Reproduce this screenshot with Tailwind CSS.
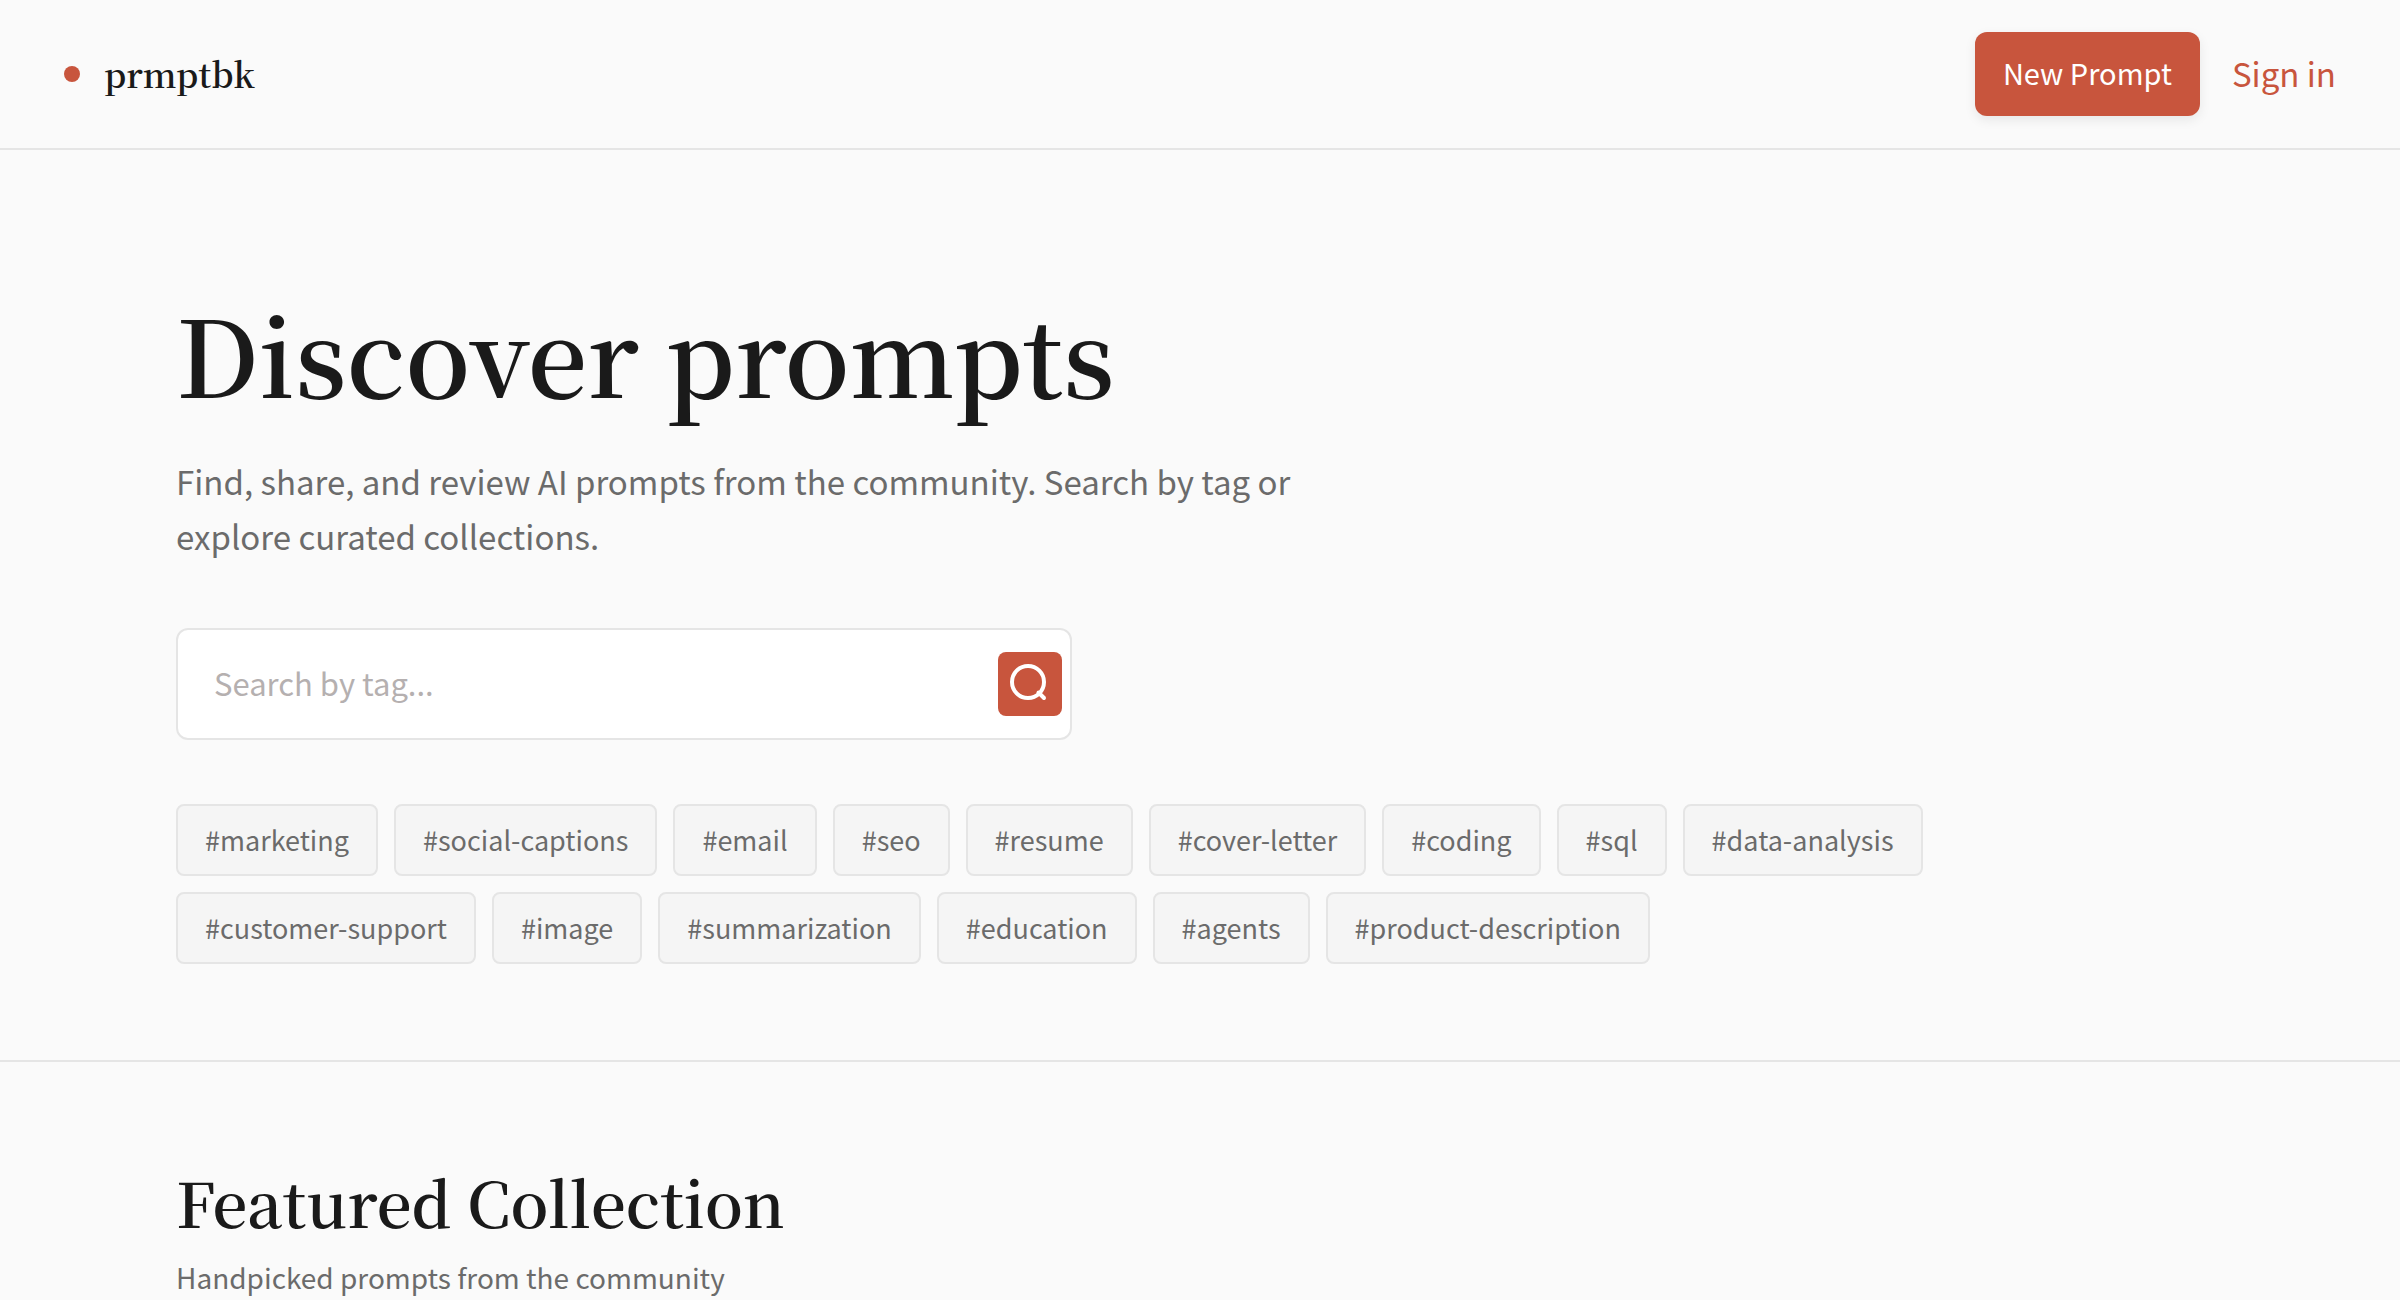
<!DOCTYPE html>
<html lang="en">
<head>
  <meta charset="UTF-8">
  <meta name="viewport" content="width=device-width, initial-scale=1.0">
  <title>prmptbk</title>
  <script src="https://cdn.jsdelivr.net/npm/@tailwindcss/browser@4"></script>
</head>
<body class="bg-[#fafafa] min-h-screen overflow-x-hidden text-[#6b6b6b] font-['Noto_Sans_CJK_SC','Noto_Sans',sans-serif]">

  <!-- Header -->
  <header class="flex items-center justify-between px-16 py-8 border-b-2 border-[#e5e5e5]">
    <a href="#" class="flex items-center gap-6 text-[#1a1a1a]">
      <span class="size-4 rounded-full bg-[#c8553d]"></span>
      <span class="font-['Noto_Serif_CJK_SC','Source_Serif_4','Liberation_Serif',serif] text-[34px] leading-[48px] font-semibold">prmptbk</span>
    </a>
    <nav class="flex items-center gap-8">
      <button type="button" class="h-21 px-7 pb-[2px] rounded-xl bg-[#c8553d] text-white text-[29px] shadow-[0_4px_12px_rgba(0,0,0,0.08)] hover:bg-[#b34a34]">New Prompt</button>
      <a href="#" class="text-[33px] text-[#c8553d]">Sign in</a>
    </nav>
  </header>

  <main>
    <!-- Hero -->
    <section class="border-b-2 border-[#e5e5e5]">
      <div class="max-w-[2176px] mx-auto px-16 pt-33 pb-24">
        <h1 class="font-['Noto_Serif_CJK_SC','Source_Serif_4','Liberation_Serif',serif] text-[106px] leading-[140px] font-semibold text-[#1a1a1a]">Discover prompts</h1>
        <p class="mt-8 max-w-[1152px] text-[33px] leading-[55px]">Find, share, and review AI prompts from the community. Search by tag or explore curated collections.</p>

        <form class="relative mt-16 max-w-[896px]">
          <input type="text" aria-label="Search by tag" placeholder="Search by tag..." class="block w-full h-28 pl-9 pr-24 pb-1 rounded-xl border-2 border-[#e5e5e5] bg-white text-[31px] text-[#1a1a1a] placeholder:text-[#b5b0b0] focus:outline-none focus:border-[#c8553d]">
          <button type="submit" aria-label="Search" class="absolute right-[10px] inset-y-0 my-auto size-16 rounded-lg bg-[#c8553d] flex items-center justify-center hover:bg-[#b34a34]">
            <svg class="size-16" viewBox="0 0 64 64" fill="none" stroke="white" stroke-width="4" stroke-linecap="round">
              <circle cx="30" cy="30" r="16"/>
              <path d="M40.500 40.500L46 46"/>
            </svg>
          </button>
        </form>

        <div class="mt-16 flex flex-wrap gap-4 text-[27px]">
          <a href="#" class="h-18 px-[27px] flex items-center rounded-lg border-2 border-[#e5e5e5] bg-[#f5f5f5]">#marketing</a>
          <a href="#" class="h-18 px-[27px] flex items-center rounded-lg border-2 border-[#e5e5e5] bg-[#f5f5f5]">#social-captions</a>
          <a href="#" class="h-18 px-[27px] flex items-center rounded-lg border-2 border-[#e5e5e5] bg-[#f5f5f5]">#email</a>
          <a href="#" class="h-18 px-[27px] flex items-center rounded-lg border-2 border-[#e5e5e5] bg-[#f5f5f5]">#seo</a>
          <a href="#" class="h-18 px-[27px] flex items-center rounded-lg border-2 border-[#e5e5e5] bg-[#f5f5f5]">#resume</a>
          <a href="#" class="h-18 px-[27px] flex items-center rounded-lg border-2 border-[#e5e5e5] bg-[#f5f5f5]">#cover-letter</a>
          <a href="#" class="h-18 px-[27px] flex items-center rounded-lg border-2 border-[#e5e5e5] bg-[#f5f5f5]">#coding</a>
          <a href="#" class="h-18 px-[27px] flex items-center rounded-lg border-2 border-[#e5e5e5] bg-[#f5f5f5]">#sql</a>
          <a href="#" class="h-18 px-[27px] flex items-center rounded-lg border-2 border-[#e5e5e5] bg-[#f5f5f5]">#data-analysis</a>
          <a href="#" class="h-18 px-[27px] flex items-center rounded-lg border-2 border-[#e5e5e5] bg-[#f5f5f5]">#customer-support</a>
          <a href="#" class="h-18 px-[27px] flex items-center rounded-lg border-2 border-[#e5e5e5] bg-[#f5f5f5]">#image</a>
          <a href="#" class="h-18 px-[27px] flex items-center rounded-lg border-2 border-[#e5e5e5] bg-[#f5f5f5]">#summarization</a>
          <a href="#" class="h-18 px-[27px] flex items-center rounded-lg border-2 border-[#e5e5e5] bg-[#f5f5f5]">#education</a>
          <a href="#" class="h-18 px-[27px] flex items-center rounded-lg border-2 border-[#e5e5e5] bg-[#f5f5f5]">#agents</a>
          <a href="#" class="h-18 px-[27px] flex items-center rounded-lg border-2 border-[#e5e5e5] bg-[#f5f5f5]">#product-description</a>
        </div>
      </div>
    </section>

    <!-- Featured Collection -->
    <section class="max-w-[2176px] mx-auto px-16 pt-24">
      <h2 class="font-['Noto_Serif_CJK_SC','Source_Serif_4','Liberation_Serif',serif] text-[62px] leading-[88px] font-semibold text-[#1a1a1a]">Featured Collection</h2>
      <p class="mt-2 text-[28px] leading-[46px]">Handpicked prompts from the community</p>
    </section>
  </main>

</body>
</html>
